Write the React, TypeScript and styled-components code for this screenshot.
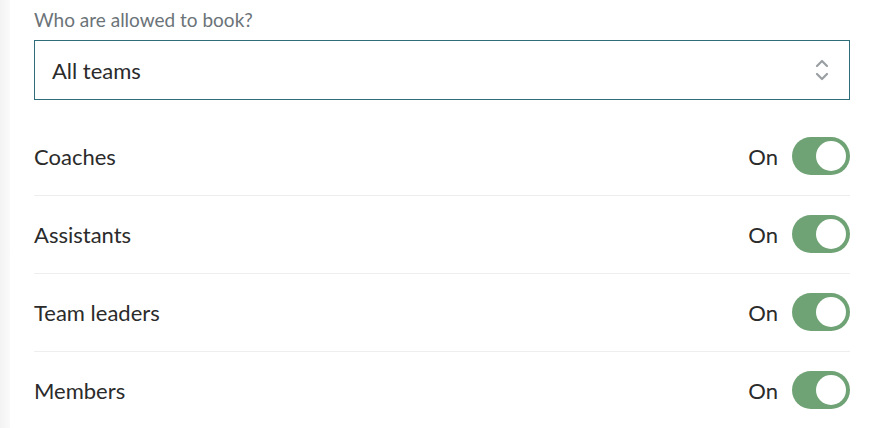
import React from "react";
import styled, { createGlobalStyle } from "styled-components";

const GlobalStyle = createGlobalStyle`
  html, body {
    margin: 0;
    padding: 0;
    background: #ffffff;
  }
  body {
    font-family: Lato, "Open Sans", sans-serif;
    color: #2b2b2b;
  }
`;

const Page = styled.div`
  display: flex;
  min-height: 428px;
  width: 872px;
  overflow: hidden;
`;

const SideStrip = styled.div`
  width: 10px;
  flex: 0 0 10px;
  background: linear-gradient(to right, #f3f3f3, #fafafa);
`;

const Content = styled.div`
  flex: 1;
  padding: 9px 22px 0 24px;
  display: flex;
  flex-direction: column;
`;

const FieldLabel = styled.div`
  font-size: 19px;
  line-height: 21px;
  color: #6b7378;
  margin-bottom: 10px;
`;

const SelectBox = styled.div`
  height: 58px;
  border: 1px solid #2f6d7b;
  display: flex;
  align-items: center;
  justify-content: space-between;
  padding: 0 20px 0 17px;
  font-size: 22px;
  color: #2b2b2b;
  margin-bottom: 18px;
`;

const Chevrons = styled.svg`
  width: 14px;
  height: 24px;
  display: block;
`;

const Row = styled.div<{ $last?: boolean }>`
  display: flex;
  align-items: center;
  justify-content: space-between;
  padding: 19px 0 20px;
  border-bottom: ${(p) => (p.$last ? "none" : "1px solid #eeeeee")};
`;

const RowLabel = styled.span`
  font-size: 22px;
  color: #2b2b2b;
`;

const ToggleGroup = styled.div`
  display: flex;
  align-items: center;
  gap: 14px;
`;

const StateText = styled.span`
  font-size: 22px;
  color: #2b2b2b;
`;

const Track = styled.div<{ $on: boolean }>`
  width: 58px;
  height: 38px;
  border-radius: 19px;
  background: ${(p) => (p.$on ? "#6fa274" : "#cccccc")};
  display: flex;
  align-items: center;
  justify-content: ${(p) => (p.$on ? "flex-end" : "flex-start")};
  padding: 0 4px;
  box-sizing: border-box;
`;

const Knob = styled.div`
  width: 30px;
  height: 30px;
  border-radius: 50%;
  background: #ffffff;
`;

const roles = ["Coaches", "Assistants", "Team leaders", "Members"];

export default function App() {
  return (
    <>
      <GlobalStyle />
      <Page>
        <SideStrip />
        <Content>
          <FieldLabel>Who are allowed to book?</FieldLabel>
          <SelectBox>
            <span>All teams</span>
            <Chevrons viewBox="0 0 14 24" fill="none">
              <path d="M2 8 L7 3 L12 8" stroke="#9a9fa3" strokeWidth="2.2" strokeLinecap="round" strokeLinejoin="round" />
              <path d="M2 16 L7 21 L12 16" stroke="#9a9fa3" strokeWidth="2.2" strokeLinecap="round" strokeLinejoin="round" />
            </Chevrons>
          </SelectBox>
          {roles.map((r, i) => (
            <Row key={r} $last={i === roles.length - 1}>
              <RowLabel>{r}</RowLabel>
              <ToggleGroup>
                <StateText>On</StateText>
                <Track $on>
                  <Knob />
                </Track>
              </ToggleGroup>
            </Row>
          ))}
        </Content>
      </Page>
    </>
  );
}
